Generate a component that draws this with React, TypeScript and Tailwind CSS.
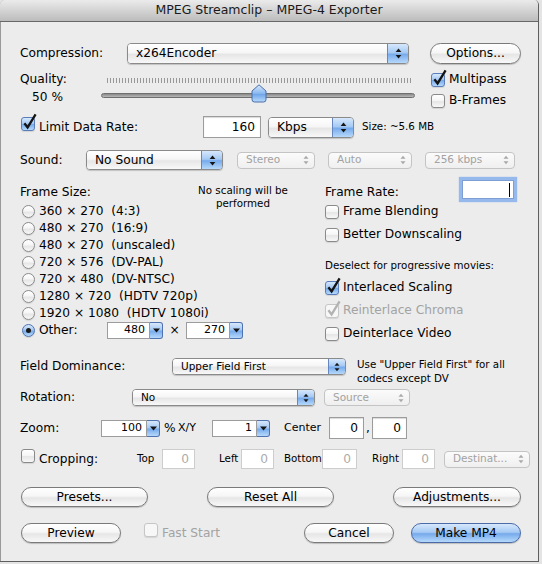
import React from 'react'

const WHITE = 'bg-[linear-gradient(to_bottom,#ffffff_0%,#f6f6f6_45%,#e6e6e6_55%,#f8f8f8_100%)]'
const BLUE = 'bg-[linear-gradient(to_bottom,#d6e8fc_0%,#a5c9f4_46%,#76aaec_54%,#b6d9fb_100%)]'

function Arrows({ dim = false, small = false }: { dim?: boolean; small?: boolean }) {
  return (
    <svg
      width={small ? 6 : 7}
      height={small ? 10 : 11}
      viewBox="0 0 7 11"
      className={dim ? 'fill-[#a9a9a9]' : 'fill-[#161616]'}
    >
      <polygon points="3.5,0.6 6.4,4 0.6,4" />
      <polygon points="0.6,7 6.4,7 3.5,10.4" />
    </svg>
  )
}

function PopUp({ label, className, small }: { label: string; className: string; small?: boolean }) {
  return (
    <div
      className={`flex shrink-0 items-stretch overflow-hidden rounded-[4px] border border-[#8a8a8a] shadow-[0_1px_1px_rgba(0,0,0,0.18)] ${className}`}
    >
      <div
        className={`flex flex-1 items-center pl-[8px] ${WHITE} ${small ? 'text-[10.5px]' : 'text-[12.2px]'}`}
      >
        {label}
      </div>
      <div
        className={`flex items-center justify-center border-l border-[#6686c0] ${BLUE} ${small ? 'w-[17px]' : 'w-[21px]'}`}
      >
        <Arrows small={small} />
      </div>
    </div>
  )
}

function DimPopUp({ label, className }: { label: string; className: string }) {
  return (
    <div
      className={`flex h-[17px] shrink-0 items-stretch rounded-[4px] border border-[#c4c4c4] bg-[linear-gradient(to_bottom,#fbfbfb,#efefef)] text-[10.5px] text-[#a2a2a2] ${className}`}
    >
      <div className="flex flex-1 items-center pl-[8px]">{label}</div>
      <div className="flex w-[17px] items-center justify-center">
        <Arrows dim small />
      </div>
    </div>
  )
}

function Check({ checked, disabled }: { checked?: boolean; disabled?: boolean }) {
  const box = disabled
    ? 'border-[#c6c6c6] bg-[#f7f7f7]'
    : checked
      ? `border-[#5a7cb8] ${BLUE}`
      : `border-[#8a8a8a] ${WHITE}`
  return (
    <span
      className={`relative inline-block h-[14px] w-[14px] shrink-0 rounded-[3px] border shadow-[0_1px_1px_rgba(0,0,0,0.1)] ${box}`}
    >
      {checked && (
        <svg className="absolute left-[-1px] top-[-5px]" width="17" height="18" viewBox="0 0 17 18">
          <path
            d="M3.4 10.2 L6.6 14.4 L14.6 1.4"
            fill="none"
            stroke={disabled ? '#b3b3b3' : '#141414'}
            strokeWidth="2.3"
          />
        </svg>
      )}
    </span>
  )
}

function CheckRow({
  label,
  checked,
  disabled,
  className,
}: {
  label: string
  checked?: boolean
  disabled?: boolean
  className?: string
}) {
  return (
    <div className={`flex h-[17px] items-center ${className || ''}`}>
      <Check checked={checked} disabled={disabled} />
      <span className={`ml-[4px] whitespace-pre ${disabled ? 'text-[#a3a3a3]' : ''}`}>{label}</span>
    </div>
  )
}

function Radio({ on }: { on?: boolean }) {
  return (
    <span
      className={`flex h-[13px] w-[13px] shrink-0 items-center justify-center rounded-full border shadow-[0_1px_1px_rgba(0,0,0,0.1)] ${on ? `border-[#4f72b0] ${BLUE}` : `border-[#8a8a8a] ${WHITE}`}`}
    >
      {on && <span className="h-[5px] w-[5px] rounded-full bg-[#1b1b1b]" />}
    </span>
  )
}

function Button({ label, className, primary }: { label: string; className: string; primary?: boolean }) {
  return (
    <div
      className={`flex shrink-0 items-center justify-center rounded-full border text-[12.2px] shadow-[0_1px_1px_rgba(0,0,0,0.2)] ${primary ? `border-[#4a6aa8] ${BLUE}` : `border-[#7a7a7a] ${WHITE}`} ${className}`}
    >
      {label}
    </div>
  )
}

function Field({ value, className, dim }: { value: string; className: string; dim?: boolean }) {
  return (
    <div
      className={`flex shrink-0 items-center justify-end border bg-white pr-[5px] text-[12.2px] ${dim ? 'border-[#cdcdcd] text-[#ababab]' : 'border-[#9c9c9c] shadow-[inset_0_1px_1px_rgba(0,0,0,0.15)]'} ${className}`}
    >
      {value}
    </div>
  )
}

function Combo({ value, className }: { value: string; className: string }) {
  return (
    <div className={`flex h-[17px] shrink-0 items-stretch ${className}`}>
      <div className="flex flex-1 items-center justify-end border border-[#9c9c9c] bg-white pr-[4px] text-[11px]">
        {value}
      </div>
      <div
        className={`flex w-[13px] items-center justify-center rounded-r-[3px] border border-l-0 border-[#4f72b0] ${BLUE}`}
      >
        <svg width="7" height="5" viewBox="0 0 7 5">
          <polygon points="0,0.5 7,0.5 3.5,4.5" fill="#141414" />
        </svg>
      </div>
    </div>
  )
}

const SIZES = [
  '360 × 270  (4:3)',
  '480 × 270  (16:9)',
  '480 × 270  (unscaled)',
  '720 × 576  (DV-PAL)',
  '720 × 480  (DV-NTSC)',
  '1280 × 720  (HDTV 720p)',
  '1920 × 1080  (HDTV 1080i)',
]

export default function App() {
  return (
    <div className="h-[564px] w-[542px] overflow-hidden bg-[#e4e4e4] font-['DejaVu_Sans','Liberation_Sans',sans-serif] text-[12.2px] text-black">
      <div className="flex h-[562px] w-[539px] flex-col overflow-hidden rounded-t-[5px] border-r border-b border-[#5f5f5f] bg-[#ececec] shadow-[inset_1px_0_0_#9a9a9a]">
        {/* title bar */}
        <div className="flex h-[22px] shrink-0 items-center justify-center border-b border-[#686868] bg-[linear-gradient(to_bottom,#ebebeb,#bcbcbc)] text-[12.5px] text-[#1a1a1a]">
          MPEG Streamclip – MPEG-4 Exporter
        </div>

        {/* compression */}
        <div className="mt-[21px] flex h-[21px] items-center *:shrink-0">
          <span className="ml-[20px] w-[107px]">Compression:</span>
          <PopUp label="x264Encoder" className="h-[21px] w-[282px]" />
          <Button label="Options..." className="ml-[21px] h-[21px] w-[91px]" />
        </div>

        {/* quality */}
        <div className="mt-[4px] flex h-[40px] items-start *:shrink-0">
          <div className="ml-[20px] flex w-[81px] flex-col">
            <span className="mt-[3px] leading-[16px]">Quality:</span>
            <span className="mt-[2px] pl-[12px] leading-[16px]">50 %</span>
          </div>
          <div className="relative h-[40px] w-[314px]">
            <div className="ml-[6px] mt-[10px] h-[5px] w-[304px] bg-[repeating-linear-gradient(to_right,#989898_0_1px,transparent_1px_3px)]" />
            <div className="mt-[10px] h-[5px] w-[314px] rounded-full border border-[#6f6f6f] bg-[linear-gradient(to_bottom,#8a8a8a,#b8b8b8)]" />
            <svg className="absolute left-[150px] top-[16px]" width="16" height="19" viewBox="0 0 16 19">
              <defs>
                <linearGradient id="thumb" x1="0" y1="0" x2="0" y2="1">
                  <stop offset="0" stopColor="#d8e9fc" />
                  <stop offset="0.5" stopColor="#8ab8f0" />
                  <stop offset="0.55" stopColor="#6ea5ea" />
                  <stop offset="1" stopColor="#b9dbfb" />
                </linearGradient>
              </defs>
              <path
                d="M1 7 L8 0.8 L15 7 V15.5 Q15 18 12.5 18 H3.5 Q1 18 1 15.5 Z"
                fill="url(#thumb)"
                stroke="#4b6ea8"
                strokeWidth="1"
              />
            </svg>
          </div>
          <div className="ml-[16px] flex flex-col">
            <CheckRow label="Multipass" checked className="mt-[3px]" />
            <CheckRow label="B-Frames" className="mt-[4px]" />
          </div>
        </div>

        {/* limit data rate */}
        <div className="mt-[8px] flex h-[22px] items-center *:shrink-0">
          <span className="ml-[21px]">
            <Check checked />
          </span>
          <span className="ml-[4px] w-[164px]">Limit Data Rate:</span>
          <Field value="160" className="h-[22px] w-[58px]" />
          <PopUp label="Kbps" className="ml-[7px] h-[21px] w-[86px]" />
          <span className="ml-[8px] text-[10.3px]">Size: ~5.6 MB</span>
        </div>

        {/* sound */}
        <div className="mt-[12px] flex h-[20px] items-center *:shrink-0">
          <span className="ml-[20px] w-[66px]">Sound:</span>
          <PopUp label="No Sound" className="h-[20px] w-[137px]" />
          <DimPopUp label="Stereo" className="ml-[14px] w-[78px]" />
          <DimPopUp label="Auto" className="ml-[13px] w-[84px]" />
          <DimPopUp label="256 kbps" className="ml-[13px] w-[90px]" />
        </div>

        {/* frame size / frame rate */}
        <div className="mt-[12px] flex h-[160px] items-start *:shrink-0">
          <div className="ml-[20px] flex w-[305px] flex-col">
            <div className="flex h-[21px] items-start">
              <span className="mt-[2px] w-[171px] leading-[16px]">Frame Size:</span>
              <span className="mt-[2px] w-[104px] text-center text-[10.3px] leading-[13px]">
                No scaling will be performed
              </span>
            </div>
            {SIZES.map((s) => (
              <div key={s} className="flex h-[17px] items-center">
                <span className="ml-[2px]">
                  <Radio />
                </span>
                <span className="ml-[4px] whitespace-pre">{s}</span>
              </div>
            ))}
            <div className="flex h-[17px] items-center *:shrink-0">
              <span className="ml-[2px]">
                <Radio on />
              </span>
              <span className="ml-[4px] w-[68px]">Other:</span>
              <Combo value="480" className="w-[56px]" />
              <span className="w-[23px] text-center">×</span>
              <Combo value="270" className="w-[57px]" />
            </div>
          </div>
          <div className="flex flex-col">
            <div className="flex h-[21px] items-start">
              <span className="mt-[2px] w-[137px] leading-[16px]">Frame Rate:</span>
              <div className="mt-[-2px] flex h-[19px] w-[52px] items-center justify-end border border-[#7f9fd4] bg-white pr-[3px] shadow-[0_0_1px_3px_#95b9ec]">
                <span className="h-[14px] w-px bg-black" />
              </div>
            </div>
            <CheckRow label="Frame Blending" />
            <CheckRow label="Better Downscaling" className="mt-[6px]" />
            <div className="mt-[14px] flex h-[17px] items-center text-[10.3px]">
              Deselect for progressive movies:
            </div>
            <CheckRow label="Interlaced Scaling" checked className="mt-[5px]" />
            <CheckRow label="Reinterlace Chroma" checked disabled className="mt-[6px]" />
            <CheckRow label="Deinterlace Video" className="mt-[6px]" />
          </div>
        </div>

        {/* field dominance */}
        <div className="mt-[16px] flex h-[17px] items-start *:shrink-0">
          <span className="ml-[20px] flex h-[17px] w-[152px] items-center">Field Dominance:</span>
          <PopUp label="Upper Field First" small className="h-[17px] w-[174px]" />
          <span className="ml-[11px] mt-[-1px] text-[10.3px] leading-[14px]">
            Use "Upper Field First" for all
            <br />
            codecs except DV
          </span>
        </div>

        {/* rotation */}
        <div className="mt-[14px] flex h-[17px] items-center *:shrink-0">
          <span className="ml-[20px] w-[112px]">Rotation:</span>
          <PopUp label="No" small className="h-[17px] w-[183px]" />
          <DimPopUp label="Source" className="ml-[9px] w-[86px]" />
        </div>

        {/* zoom */}
        <div className="mt-[11px] flex h-[22px] items-center *:shrink-0">
          <span className="ml-[20px] w-[81px]">Zoom:</span>
          <Combo value="100" className="w-[59px]" />
          <span className="ml-[4px] w-[14px]">%</span>
          <span className="w-[34px] text-[11px]">X/Y</span>
          <Combo value="1" className="w-[58px]" />
          <span className="ml-[14px] w-[45px] text-[11px]">Center</span>
          <Field value="0" className="h-[22px] w-[35px]" />
          <span className="w-[8px] text-center">,</span>
          <Field value="0" className="h-[22px] w-[35px]" />
        </div>

        {/* cropping */}
        <div className="mt-[10px] flex h-[20px] items-center *:shrink-0">
          <span className="ml-[21px]">
            <Check />
          </span>
          <span className="ml-[4px] w-[98px]">Cropping:</span>
          <span className="w-[25px] text-[10.3px]">Top</span>
          <Field value="0" dim className="h-[20px] w-[33px]" />
          <span className="ml-[24px] w-[22px] text-[10.3px]">Left</span>
          <Field value="0" dim className="h-[20px] w-[33px]" />
          <span className="ml-[10px] w-[38px] text-[10.3px]">Bottom</span>
          <Field value="0" dim className="h-[20px] w-[35px]" />
          <span className="ml-[15px] w-[30px] text-[10.3px]">Right</span>
          <Field value="0" dim className="h-[20px] w-[33px]" />
          <DimPopUp label="Destinat..." className="ml-[9px] w-[86px]" />
        </div>

        {/* presets row */}
        <div className="mt-[18px] flex h-[20px] items-center *:shrink-0">
          <Button label="Presets..." className="ml-[21px] h-[20px] w-[127px]" />
          <Button label="Reset All" className="ml-[59px] h-[20px] w-[127px]" />
          <Button label="Adjustments..." className="ml-[59px] h-[20px] w-[128px]" />
        </div>

        {/* action row */}
        <div className="mt-[16px] flex h-[20px] items-center *:shrink-0">
          <Button label="Preview" className="ml-[21px] h-[20px] w-[100px]" />
          <span className="ml-[23px]">
            <Check disabled />
          </span>
          <span className="ml-[4px] w-[142px] text-[#a3a3a3]">Fast Start</span>
          <Button label="Cancel" className="h-[20px] w-[90px]" />
          <Button label="Make MP4" primary className="ml-[17px] h-[20px] w-[110px]" />
        </div>
      </div>
    </div>
  )
}
